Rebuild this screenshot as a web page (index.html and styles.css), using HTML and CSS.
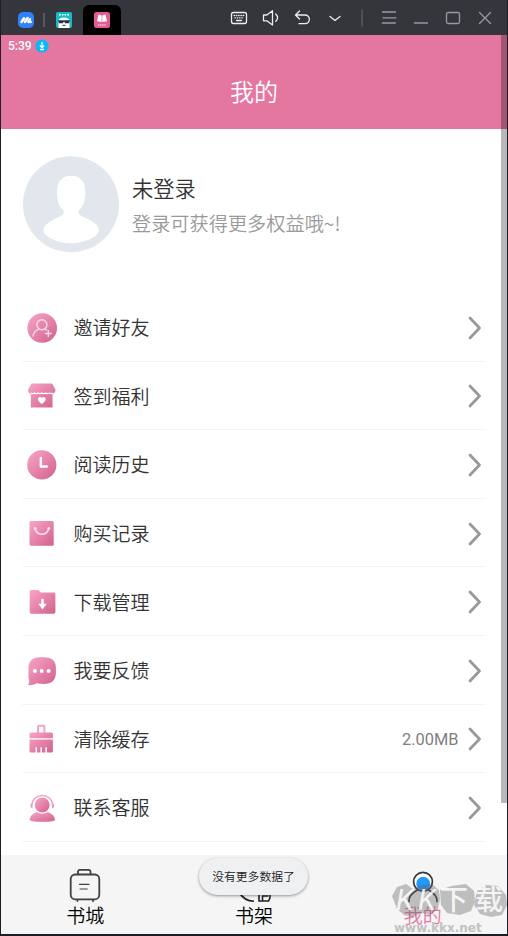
FILE: index.html
```html
<!DOCTYPE html>
<html lang="zh-CN">
<head>
<meta charset="utf-8">
<title>我的</title>
<link rel="stylesheet" href="styles.css">
</head>
<body>
<svg class="defs" width="0" height="0">
  <defs>
    <linearGradient id="pink" x1="0" y1="0" x2="1" y2="1"><stop offset="0" stop-color="#f7a6c8"/><stop offset=".5" stop-color="#e583aa"/><stop offset="1" stop-color="#d0618c"/></linearGradient>
    <symbol id="chevron" viewBox="0 0 14 26"><path d="M2 3 11.500 13 2 23" fill="none" stroke="#999" stroke-width="2.800" stroke-linecap="round" stroke-linejoin="round"/></symbol>
  </defs>
</svg>
<div class="window">
  <div class="titlebar">
    <div class="tabs">
      <svg class="logo" viewBox="0 0 16 16"><rect width="16" height="16" rx="5" fill="#2f82fb"/><path d="M3.500 10 6 6.200M7 10l2.600-4M10.400 10 12 7.400" stroke="#fff" stroke-width="2.500" stroke-linecap="round"/><circle cx="12.700" cy="10" r="1.200" fill="#fff"/></svg>
      <i class="tab-sep"></i>
      <svg class="magic" viewBox="0 0 16 16"><rect width="16" height="16" rx="2" fill="#16bcc5"/><path d="M3 2.800h2M6 2.800h1.500M8.500 2.800H10M11 2.800h2" stroke="#dff" stroke-width="1.600"/><path d="M2.500 16V9q0-3.500 5.500-3.500T13.500 9v7z" fill="#fff"/><path d="M2 8.300h12l-1 3H9.300L8 9.500l-1.300 1.800H3z" fill="#273238"/><path d="M6.500 13.300h3" stroke="#333"/></svg>
      <div class="active-tab"><svg viewBox="0 0 16 16"><rect width="16" height="16" rx="2.500" fill="#e25c90"/><path d="M4.500 2.500 7.700 3.500V10L3 9.200zM11.500 2.500l-3.200 1V10L13 9.200z" fill="#fff"/><path d="M4 13h8" stroke="#fbd" stroke-width="1.400" stroke-dasharray="1.400 .7"/></svg></div>
    </div>
    <svg class="controls" viewBox="0 0 270 24" fill="none" stroke-linecap="round" stroke-linejoin="round">
      <g stroke="#eee" stroke-width="1.300">
        <rect x="3.500" y="6.500" width="15" height="11" rx="2"/><path d="M6 9.500h10M7 11.800h8" stroke-dasharray=".5 1.800"/><path d="M8.500 14.500h5"/>
        <path d="M35.500 9h3.300l5.700-4.300v14.300l-5.700-4.200h-3.300zM47.700 8q3.800 3.700 0 7.400"/>
        <path d="m71.500 5-4 4 4 4M68 9h9a4.300 4.300 0 0 1 0 8.700h-6"/>
        <path d="m102 10.500 5 4 5-4"/>
      </g>
      <path d="M134 4v16" stroke="#606167" stroke-width="1.300"/>
      <g stroke="#9799a6" stroke-width="1.300"><path d="M154.500 6h13M155 11.800h13M154.500 17h13M186.500 17h13M251.500 6.500l11 11M262.500 6.500l-11 11"/><rect x="218.500" y="6.500" width="13" height="11" rx="1.500"/></g>
    </svg>
  </div>
  <div class="screen">
    <header class="header">
      <div class="status"><span>5:39</span><svg viewBox="0 0 14 14"><circle cx="7" cy="7" r="6.600" fill="#08b8fb"/><path d="M7 3v6M4.800 6.500 7 8.700l2.200-2.200M5 10.500h4" fill="none" stroke="#fff" stroke-width="1.300"/></svg></div>
      <h1>我的</h1>
    </header>
    <section class="profile">
      <svg class="avatar" viewBox="0 0 96 96"><circle cx="48" cy="48" r="48" fill="#e2e7ee"/><path d="M48 19.500c9 0 14.300 6 14.300 16 0 9-2 15-6.500 18.500-1 3.500.5 5 4 6.500C69 64 76 69 76 74c0 6-14 13-28 13S20.500 80 20.500 74c0-5 7-10 16-13.500 3.500-1.500 5-3 4-6.500C36 50.500 34 44.500 34 35.500c0-10 5-16 14-16z" fill="#fff"/></svg>
      <div class="who"><strong>未登录</strong><span>登录可获得更多权益哦~!</span></div>
    </section>
    <main class="menu">
      <div class="row"><svg class="ico" viewBox="0 0 32 32"><circle cx="16.200" cy="16" r="14.800" fill="url(#pink)"/><g fill="none" stroke="#fbd9e8" stroke-width="1.500" stroke-linecap="round"><circle cx="15.900" cy="12.700" r="5"/><path d="M7 24q.7-4.500 5.300-6.600M19.500 17.300l1 .6M19.300 21.400h6M22.300 18.400v6"/></g></svg><span>邀请好友</span><svg class="go"><use href="#chevron"/></svg></div>
      <div class="row"><svg class="ico" viewBox="0 0 32 32"><path d="M5.500 3.400h20.700l3.300 6.400q0 3.500-3 4.200v13.400H4.800V14q-2.800-.7-2.800-4.200z" fill="url(#pink)"/><path d="M4.500 12.800q2 1.800 3.800 0 1.900 1.800 3.800 0 1.900 1.800 3.800 0 1.900 1.800 3.800 0 1.900 1.800 3.800 0 1.900 1.800 3.800 0" fill="none" stroke="#fff" stroke-width="1.100"/><path d="M15.800 24c-3-2.100-3.800-3.400-3.800-4.900 0-2.400 2.900-2.800 3.800-1 1-1.800 3.900-1.400 3.900 1 0 1.500-.9 2.800-3.900 4.900z" fill="#fff"/></svg><span>签到福利</span><svg class="go"><use href="#chevron"/></svg></div>
      <div class="row"><svg class="ico" viewBox="0 0 32 32"><circle cx="15.800" cy="15.900" r="14.600" fill="url(#pink)"/><path d="M14.800 9v8.500h6" fill="none" stroke="#fff" stroke-width="2.400" stroke-linecap="round" stroke-linejoin="round"/></svg><span>阅读历史</span><svg class="go"><use href="#chevron"/></svg></div>
      <div class="row"><svg class="ico" viewBox="0 0 32 32"><rect x="3.500" y="3" width="24.200" height="24.700" rx="1.500" fill="url(#pink)"/><path d="M9.200 10.800q1.500 5.500 6.700 5.500t6.800-5.500" fill="none" stroke="#fde4ee" stroke-width="1.500"/><circle cx="9.100" cy="10.500" r="1.400" fill="#fde4ee"/><circle cx="22.800" cy="10.500" r="1.400" fill="#fde4ee"/></svg><span>购买记录</span><svg class="go"><use href="#chevron"/></svg></div>
      <div class="row"><svg class="ico" viewBox="0 0 32 32"><path d="M5.300 4h7.200l2.300 2.600h12.900q1.700 0 1.700 1.700V26q0 1.700-1.700 1.700H5.500q-1.800 0-1.800-1.700V5.600Q3.700 4 5.300 4z" fill="url(#pink)"/><path d="M15.300 12.800h2.400v5h3L16.500 23.400 12.200 17.800h3.100z" fill="#fff"/></svg><span>下载管理</span><svg class="go"><use href="#chevron"/></svg></div>
      <div class="row"><svg class="ico" viewBox="0 0 32 32"><path d="M14 2.200h4Q29.900 2.200 29.900 13v4.500Q29.900 29 17.500 29q-4 0-6.500-.8Q7 30.500 2 30.200q2-3 .5-7.700V13Q2.500 2.200 14 2.200z" fill="url(#pink)"/><g fill="#fff"><circle cx="8.900" cy="16.100" r="2"/><circle cx="15.700" cy="16.100" r="2"/><circle cx="22.600" cy="16.100" r="2"/></g></svg><span>我要反馈</span><svg class="go"><use href="#chevron"/></svg></div>
      <div class="row"><svg class="ico" viewBox="0 0 32 32"><rect x="12" y="2.700" width="6.400" height="9" rx="1" fill="none" stroke="#f1a3c3" stroke-width="2"/><path d="M5 9.500h20.400q1.500 0 1.500 1.500v4.300H3.500V11Q3.500 9.500 5 9.500zM3.500 16.600h23.400V28q0 1.500-1.500 1.500h-4.500v-5.300h-1.500v5.300h-3.500v-5.300h-1.500v5.300H11v-5.300H9.500v5.300H5q-1.500 0-1.500-1.500z" fill="url(#pink)"/></svg><span>清除缓存</span><em>2.00MB</em><svg class="go"><use href="#chevron"/></svg></div>
      <div class="row"><svg class="ico" viewBox="0 0 32 32"><path d="M6 13.500C6 .2 26.500.2 26.500 13.500" fill="none" stroke="#f2a2c3" stroke-width="1.400"/><path d="M6.500 11v5.500q-2.200-.5-2.200-2.800T6.500 11zM26 11v5.500q2.200-.5 2.200-2.800T26 11z" fill="#ed9abc"/><circle cx="16.200" cy="13" r="7.400" fill="url(#pink)"/><path d="M10.500 20q5.800 3.500 11.500 0 7 3 7 8.300-2.500 1.500-12.700 1.500T3.600 28.300q0-5.300 6.900-8.300z" fill="url(#pink)"/></svg><span>联系客服</span><svg class="go"><use href="#chevron"/></svg></div>
    </main>
    <nav class="tabbar">
      <a><svg viewBox="0 0 36 36" fill="none" stroke="#404040" stroke-width="1.800" stroke-linecap="round"><rect x="3.700" y="7.500" width="28.600" height="24.800" rx="4.500"/><path d="M11 7V4.800q0-2 2-2h8.500q2 0 2 2V7M10.500 33v1M26 33v1"/><path d="M12.500 17.300h9.500M13 22h7.200" stroke-width="1.200"/></svg><span>书城</span></a>
      <a><svg viewBox="0 0 36 36" fill="none" stroke="#222" stroke-width="1.600"><path d="M3 25q5 9 15 9.300M23 26v8h9.500q2.500-4 1-7M26.500 34v-5h6"/></svg><span>书架</span></a>
      <a class="current"><svg viewBox="0 0 36 36" fill="none" stroke="#35363b" stroke-width="1.700" stroke-linecap="round"><circle cx="18" cy="14.800" r="9.400" fill="#fff"/><circle cx="18.200" cy="16.700" r="6.900" fill="#2199fb" stroke="none"/><path d="M4 34.500q-.5-6.500 8-11.200M32 34.500q.5-6.500-8-11.200"/></svg><span>我的</span></a>
    </nav>
  </div>
  <i class="scrollbar"></i>
  <div class="toast">没有更多数据了</div>
  <div class="watermark">
    <svg viewBox="0 0 116 36"><path d="m1 14 5-9 9-3 7 5 8-4 11-1 7 6 1 9-2 10-8 6-8-2-9 4-9-2-7-6zM49 8l11-4 15-2 8 7 1 10-4 10-11 4-13-2-6-8zM86 9l9-6 12 1 8 9 1 10-5 10-11 2-11-3-6-9z"/></svg>
    <div class="brand"><i>K</i><i>K</i><b>下</b><b>载</b></div>
    <div class="url">www.kkx.net</div>
  </div>
</div>
</body>
</html>
```
FILE: styles.css
```css
* { box-sizing: border-box; }
body { margin: 0; background: #1c1d27; font-family: Roboto, "Noto Sans CJK SC", sans-serif; }
.defs { position: absolute; }
.window { position: relative; width: 508px; height: 936px; padding: 0 1px 2px; overflow: hidden; display: flex; flex-direction: column; }
.titlebar { height: 35px; flex: none; background: #35363b; display: flex; justify-content: space-between; padding-left: 17px; }
.tabs { display: flex; align-items: center; padding-top: 5px; }
.tabs svg { width: 16px; height: 16px; display: block; }
.tab-sep { width: 2px; height: 14px; margin: 0 11px 0 9px; background: #57585d; }
.active-tab { width: 38px; height: 30px; margin-left: 11px; padding: 7px 11px; background: #000; border-radius: 6px 6px 0 0; }
.controls { width: 270px; height: 24px; margin: 6px 9px 0 0; }
.screen { flex: 1; min-height: 0; background: #fff; display: flex; flex-direction: column; }
.header { height: 94px; flex: none; background: #e477a0; color: #fff; }
.status { height: 21px; padding-left: 7px; display: flex; align-items: center; gap: 3px; font-size: 12px; font-weight: 500; }
.status svg { width: 14px; height: 14px; }
h1 { margin: 19px 0 0; text-align: center; font-size: 24px; line-height: 37px; font-weight: 350; }
.profile { height: 164px; flex: none; padding: 27px 0 0 21.5px; display: flex; gap: 13.5px; }
.avatar { width: 96px; height: 96.5px; }
.who { display: flex; flex-direction: column; padding-top: 16px; font-family: "Noto Sans CJK SC", sans-serif; }
.who strong { font-size: 21.3px; line-height: 32px; font-weight: 350; color: #333; }
.who span { margin-top: 5px; font-size: 19.2px; line-height: 28px; font-weight: 350; color: #999; }
.menu { flex: 1; padding: 0 21px; }
.row { height: 68.6px; display: flex; align-items: center; border-bottom: 1px solid #f4f4f4; padding: 0 4.5px 0 3.5px; font-size: 19px; font-weight: 350; color: #333; }
.ico { width: 32px; height: 32px; margin: 2px 16px 0 0; }
.row em { margin: 2px 0 0 auto; font-style: normal; font-size: 16.4px; font-weight: 400; color: #808080; }
.go { width: 14px; height: 26px; margin: 2px 0 0 auto; }
.row em + .go { margin-left: 9px; }
.tabbar { height: 79px; flex: none; background: #f5f5f5; display: flex; }
.tabbar a { flex: 1; display: flex; flex-direction: column; align-items: center; padding-top: 12px; font-size: 19px; line-height: 27px; font-weight: 350; color: #000; }
.tabbar svg { width: 36px; height: 36px; }
.tabbar .current { color: #e477a0; }
.scrollbar { position: absolute; left: 501px; top: 35px; width: 6px; height: 768px; background: rgba(0,0,0,.28); }
.toast { position: absolute; left: 199px; top: 858px; width: 109px; height: 37px; border-radius: 19px; background: #eff0f1; box-shadow: 0 1px 3px rgba(0,0,0,.4); text-align: center; font-size: 11.8px; font-weight: 350; line-height: 38px; color: #222; }
.watermark { position: absolute; left: 391px; top: 882px; width: 116px; height: 52px; }
.watermark svg { position: absolute; width: 116px; height: 36px; fill: rgba(95,95,95,.36); }
.brand { position: absolute; left: 5px; top: 2px; height: 32px; display: flex; color: rgba(255,255,255,.85); font-size: 29px; line-height: 32px; }
.brand i { width: 22px; }
.brand b { width: 35px; font-weight: 400; }
.brand b + b { width: 28px; }
.brand b { font: 500 28px/28px "Noto Sans CJK SC", sans-serif; }
.url { position: absolute; left: 3px; top: 40px; font: bold 12px/12px "DejaVu Sans", sans-serif; color: #c2c2c2; }
```
